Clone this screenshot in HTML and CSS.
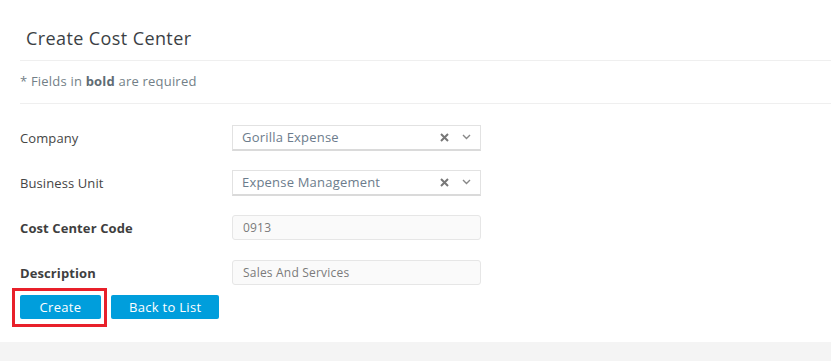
FILE: index.html
```html
<!DOCTYPE html>
<html lang="en">
  <head>
    <meta charset="UTF-8" />
    <meta name="viewport" content="width=device-width, initial-scale=1.0" />
    <title>Create Cost Center</title>
    <link rel="stylesheet" href="styles.css">
  </head>
  <body>
    <div class="card">
      <h2 class="titulo">Create Cost Center</h2>

      <p class="aviso">* Fields in <b>bold</b> are required</p>

      <form class="formulario">
        <div class="linha">
          <label>Company</label>
          <div class="seletor">
            <span class="valor">Gorilla Expense</span>
            <svg class="limpar" width="9" height="9" viewBox="0 0 9 9"><path d="M1 1l7 7M8 1l-7 7" stroke="#777" stroke-width="2"/></svg>
            <svg class="seta" width="9" height="6" viewBox="0 0 9 6"><path d="M1 1l3.5 3.5L8 1" fill="none" stroke="#888" stroke-width="1.4"/></svg>
          </div>
        </div>

        <div class="linha">
          <label>Business Unit</label>
          <div class="seletor">
            <span class="valor">Expense Management</span>
            <svg class="limpar" width="9" height="9" viewBox="0 0 9 9"><path d="M1 1l7 7M8 1l-7 7" stroke="#777" stroke-width="2"/></svg>
            <svg class="seta" width="9" height="6" viewBox="0 0 9 6"><path d="M1 1l3.5 3.5L8 1" fill="none" stroke="#888" stroke-width="1.4"/></svg>
          </div>
        </div>

        <div class="linha">
          <label class="obrigatorio">Cost Center Code</label>
          <input type="text" class="campo" value="0913" />
        </div>

        <div class="linha ultima">
          <label class="obrigatorio">Description</label>
          <input type="text" class="campo" value="Sales And Services" />
        </div>

        <div class="botoes">
          <button type="button" class="destaque">Create</button>
          <button type="button">Back to List</button>
        </div>
      </form>
    </div>
  </body>
</html>
```

FILE: styles.css
```css
body {
  font-family: "Open Sans", Arial, sans-serif;
  background-color: #f4f4f4;
  margin: 0;
}

.card {
  background-color: #ffffff;
  padding: 0 0 23px 20px;
  box-shadow: 0 2px 6px rgba(0, 0, 0, 0.06);
}

.titulo {
  margin: 0;
  height: 61px;
  box-sizing: border-box;
  padding: 27px 0 0 6px;
  font-size: 18px;
  font-weight: 500;
  line-height: 22px;
  letter-spacing: 0.4px;
  color: #3b3f45;
  border-bottom: 1px solid #efefef;
}

.aviso {
  margin: 0;
  height: 42px;
  line-height: 41px;
  font-size: 13px;
  letter-spacing: 0.2px;
  color: #737f87;
  border-bottom: 1px solid #efefef;
}

.aviso b {
  color: #5f6c74;
}

.formulario {
  padding-top: 21px;
}

.linha {
  display: flex;
  align-items: center;
  height: 25px;
  margin-bottom: 20px;
}

.linha.ultima {
  margin-bottom: 10px;
}

label {
  width: 212px;
  font-size: 13px;
  letter-spacing: 0.1px;
  color: #454545;
}

label.obrigatorio {
  font-weight: bold;
  color: #3f3f3f;
}

.seletor {
  width: 249px;
  height: 26px;
  box-sizing: border-box;
  display: flex;
  align-items: center;
  padding: 0 9px 0 9px;
  border: 1px solid #e2e2e2;
  border-bottom: 2px solid #dadada;
  background-color: #ffffff;
}

.valor {
  flex: 1;
  font-size: 13px;
  letter-spacing: 0.2px;
  color: #6c7c8c;
}

.limpar {
  margin-right: 13px;
}

.campo {
  width: 249px;
  height: 25px;
  box-sizing: border-box;
  padding: 0 10px;
  border: 1px solid #e6e6e6;
  border-radius: 3px;
  background-color: #fafafa;
  font-family: inherit;
  font-size: 12px;
  letter-spacing: 0.2px;
  color: #7b7b7b;
}

.botoes {
  display: flex;
  gap: 10px;
}

.botoes button {
  height: 24px;
  padding: 0 18px;
  border: none;
  border-radius: 2px;
  background-color: #009edc;
  color: #ffffff;
  font-family: inherit;
  font-size: 13px;
  letter-spacing: 0.3px;
  cursor: pointer;
}

.botoes .destaque {
  position: relative;
  width: 81px;
}

.destaque::after {
  content: "";
  position: absolute;
  top: -7px;
  left: -8px;
  right: -6px;
  bottom: -8px;
  border: 3px solid #e8202a;
}
```
